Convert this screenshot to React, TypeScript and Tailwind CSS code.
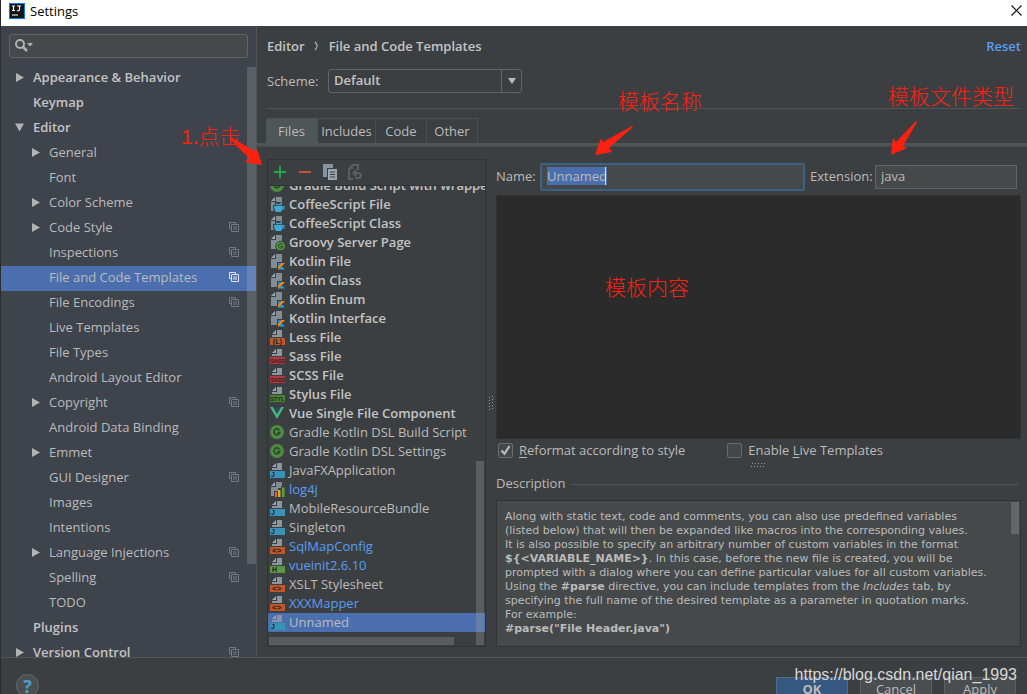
import { useEffect, useRef, useState } from "react";
import type { ReactNode } from "react";

type TreeNode = {
  label: string;
  level: 0 | 1;
  arrow?: "open" | "closed";
  project?: boolean;
};

const tree: TreeNode[] = [
  { label: "Appearance & Behavior", level: 0, arrow: "closed" },
  { label: "Keymap", level: 0 },
  { label: "Editor", level: 0, arrow: "open" },
  { label: "General", level: 1, arrow: "closed" },
  { label: "Font", level: 1 },
  { label: "Color Scheme", level: 1, arrow: "closed" },
  { label: "Code Style", level: 1, arrow: "closed", project: true },
  { label: "Inspections", level: 1, project: true },
  { label: "File and Code Templates", level: 1, project: true },
  { label: "File Encodings", level: 1, project: true },
  { label: "Live Templates", level: 1 },
  { label: "File Types", level: 1 },
  { label: "Android Layout Editor", level: 1 },
  { label: "Copyright", level: 1, arrow: "closed", project: true },
  { label: "Android Data Binding", level: 1 },
  { label: "Emmet", level: 1, arrow: "closed" },
  { label: "GUI Designer", level: 1, project: true },
  { label: "Images", level: 1 },
  { label: "Intentions", level: 1 },
  { label: "Language Injections", level: 1, arrow: "closed", project: true },
  { label: "Spelling", level: 1, project: true },
  { label: "TODO", level: 1 },
  { label: "Plugins", level: 0 },
  { label: "Version Control", level: 0, arrow: "closed", project: true },
];

type Kind =
  | "gradle" | "coffee" | "gsp" | "kotlin" | "less" | "sass" | "styl"
  | "vue" | "java" | "log" | "xml" | "html";

type Template = { label: string; kind: Kind; tone: "bold" | "plain" | "custom" };

const templates: Template[] = [
  { label: "Gradle Build Script with wrapper", kind: "gradle", tone: "bold" },
  { label: "CoffeeScript File", kind: "coffee", tone: "bold" },
  { label: "CoffeeScript Class", kind: "coffee", tone: "bold" },
  { label: "Groovy Server Page", kind: "gsp", tone: "bold" },
  { label: "Kotlin File", kind: "kotlin", tone: "bold" },
  { label: "Kotlin Class", kind: "kotlin", tone: "bold" },
  { label: "Kotlin Enum", kind: "kotlin", tone: "bold" },
  { label: "Kotlin Interface", kind: "kotlin", tone: "bold" },
  { label: "Less File", kind: "less", tone: "bold" },
  { label: "Sass File", kind: "sass", tone: "bold" },
  { label: "SCSS File", kind: "sass", tone: "bold" },
  { label: "Stylus File", kind: "styl", tone: "bold" },
  { label: "Vue Single File Component", kind: "vue", tone: "bold" },
  { label: "Gradle Kotlin DSL Build Script", kind: "gradle", tone: "plain" },
  { label: "Gradle Kotlin DSL Settings", kind: "gradle", tone: "plain" },
  { label: "JavaFXApplication", kind: "java", tone: "plain" },
  { label: "log4j", kind: "log", tone: "custom" },
  { label: "MobileResourceBundle", kind: "java", tone: "plain" },
  { label: "Singleton", kind: "java", tone: "plain" },
  { label: "SqlMapConfig", kind: "xml", tone: "custom" },
  { label: "vueinit2.6.10", kind: "html", tone: "custom" },
  { label: "XSLT Stylesheet", kind: "xml", tone: "plain" },
  { label: "XXXMapper", kind: "xml", tone: "custom" },
  { label: "Unnamed", kind: "java", tone: "plain" },
];

const toneClass = {
  bold: "font-semibold text-[#c4c4c4]",
  plain: "text-[#bbbbbb]",
  custom: "text-[#589df6]",
};

const bands: Partial<Record<Kind, { fill: string; text: string; size: number; x: number }>> = {
  less: { fill: "#c1562a", text: "{L}", size: 7, x: 2.5 },
  sass: { fill: "#b03a3f", text: "SASS", size: 5.3, x: 0.4 },
  styl: { fill: "#4b7f36", text: "STYL", size: 5.6, x: 0.2 },
  java: { fill: "#3a93b6", text: "J", size: 7, x: 1 },
  xml: { fill: "#c1562a", text: "<>", size: 8, x: 2 },
  html: { fill: "#5b9546", text: "H", size: 7, x: 2 },
};

function FileIcon({ kind }: { kind: Kind }) {
  const band = bands[kind];
  let drawing: ReactNode;
  if (kind === "gradle") {
    drawing = (
      <>
        <circle cx="7" cy="7" r="7" fill="#4f8a43" />
        <path d="M9.400 5.300A2.900 2.900 0 1 0 9.700 7.500H7.300" fill="none" stroke="#2b3f28" strokeWidth="1.500" />
      </>
    );
  } else if (kind === "vue") {
    drawing = (
      <>
        <path d="M0 1h3l4 7 4-7h3L7 13z" fill="#41b883" />
        <path d="M3 1h2.600L7 3.500 8.400 1H11L7 8z" fill="#35495e" />
      </>
    );
  } else if (band) {
    drawing = (
      <>
        <path d="M6 0v4H2z" fill="#9aa7b0" />
        <path d="M7 0h5v7H2V5h5z" fill="#8b979f" />
        <rect y="8" width="15" height="7" fill={band.fill} />
        <text
          x={band.x}
          y="14"
          fill="#231f20"
          fontSize={band.size}
          fontWeight="bold"
          fontFamily="Liberation Sans, sans-serif"
        >
          {band.text}
        </text>
      </>
    );
  } else {
    drawing = (
      <>
        <path d="M5 0v4H1z" fill="#9aa7b0" />
        <path d="M6 0h6v14H1V5h5z" fill="#808d95" />
        {kind === "kotlin" && (
          <>
            <path d="M7 8h8v7H7z" fill="#3c3f41" />
            <path d="M8 9h3.500L8 12.500z" fill="#1e88e5" />
            <path d="M11.500 9H15l-7 7v-3.500z" fill="#f88909" />
            <path d="M8.500 15.500l3.200-3.200L15 15.500z" fill="#19a5ee" />
          </>
        )}
        {kind === "coffee" && (
          <>
            <path d="M3 8h2V5h6v2h4v5l-2 4H5L3 12z" fill="#3c3f41" />
            <path d="M4 9h10.500v3.500H12.500L11 15H6C4.500 13 4 11 4 9z" fill="#3fa9d6" />
            <path d="M6 8.200V6.500l3 .8 1.500-1.300L12 8.200z" fill="#3fa9d6" />
            <path d="M13 10.200v1.300" stroke="#3c3f41" />
          </>
        )}
        {kind === "gsp" && (
          <>
            <circle cx="10.500" cy="11" r="4.800" fill="#4f9a3c" stroke="#3c3f41" />
            <path d="M12.500 9.800a2.200 2.200 0 1 0 .2 1.700h-2" fill="none" stroke="#21351d" />
          </>
        )}
        {kind === "log" && (
          <>
            <path d="M4 9h4V6h3V4h4v12H4z" fill="#3c3f41" />
            <path d="M5 10h2v5H5z" fill="#e0662c" />
            <path d="M8 8h2.500v7H8z" fill="#dba52f" />
            <path d="M12 5.500h2.500V15H12z" fill="#57a33f" />
          </>
        )}
      </>
    );
  }
  return (
    <svg className="h-4 w-4 shrink-0" viewBox="0 0 16 16" aria-hidden="true">
      {drawing}
    </svg>
  );
}

function TreeArrow({ state }: { state?: "open" | "closed" }) {
  return (
    <svg className="h-3 w-3 shrink-0" viewBox="0 0 12 12" fill="#b3b3b3" aria-hidden="true">
      {state === "closed" && <path d="M3 2v9l8-4.500z" />}
      {state === "open" && <path d="M2 2.500h9l-4.500 8z" />}
    </svg>
  );
}

function ProjectIcon({ active }: { active: boolean }) {
  return (
    <svg
      className={active ? "h-[10px] w-[10px] text-[#dfe3e8]" : "h-[10px] w-[10px] text-[#757a80]"}
      viewBox="0 0 10 10"
      fill="none"
      stroke="currentColor"
      aria-hidden="true"
    >
      <path d="M2 6.500H.5v-6h6V2M2.500 2.500h7v7h-7zM4 5h4M4 7h4" />
    </svg>
  );
}

function Sidebar() {
  const [selected, setSelected] = useState("File and Code Templates");
  return (
    <aside className="relative flex w-64 shrink-0 flex-col border-r border-[#53575a] bg-[#3e434c]">
      <div className="px-2 pt-2">
        <label className="flex h-6 items-center rounded-[3px] border border-[#646464] bg-[#45494a] px-[5px]">
          <span className="sr-only">Search settings</span>
          <svg className="h-4 w-5 shrink-0" viewBox="0 0 20 16" fill="none" aria-hidden="true">
            <circle cx="5" cy="6" r="4" stroke="#afb1b3" strokeWidth="2" />
            <path d="M8 9l4 4" stroke="#afb1b3" strokeWidth="2.500" />
            <path d="M12 5h6l-3 3.500z" fill="#afb1b3" />
          </svg>
          <input type="text" className="min-w-0 flex-1 bg-transparent outline-none" />
        </label>
      </div>
      <ul className="mt-2 min-h-0 flex-1 overflow-hidden">
        {tree.map((node) => {
          const active = node.label === selected;
          return (
            <li key={node.label}>
              <button
                type="button"
                onClick={() => setSelected(node.label)}
                className={`flex h-[25px] w-full items-center gap-2 pr-[17px] pb-1 text-left ${
                  node.level === 0 ? "pl-3 font-semibold text-[#c4c4c4]" : "pl-7"
                } ${active ? "bg-[#4b6eaf]" : ""}`}
              >
                <TreeArrow state={node.arrow} />
                <span className="flex-1 whitespace-nowrap">{node.label}</span>
                {node.project && <ProjectIcon active={active} />}
              </button>
            </li>
          );
        })}
      </ul>
      <div className="absolute top-[41px] right-0 h-[497px] w-[9px] bg-white/15" />
    </aside>
  );
}

function Tabs() {
  const [tab, setTab] = useState("Files");
  const tabs = [
    { name: "Files", width: "w-[52px]" },
    { name: "Includes", width: "w-[58px]" },
    { name: "Code", width: "w-[51px]" },
    { name: "Other", width: "w-[51px]" },
  ];
  return (
    <div className="mt-[9px]">
      <div className="flex pl-[9px]">
        {tabs.map((t) => (
          <button
            key={t.name}
            type="button"
            onClick={() => setTab(t.name)}
            className={`h-[25px] border-t border-r border-[#4b5052] text-center ${t.width} ${
              tab === t.name ? "bg-[#4e5658]" : ""
            }`}
          >
            {t.name}
          </button>
        ))}
      </div>
      <div className="h-[4px] border-b border-[#45494b] bg-[#4e5658]" />
    </div>
  );
}

function TemplateList() {
  const [selected, setSelected] = useState("Unnamed");
  return (
    <section className="relative flex w-[219px] shrink-0 flex-col border border-[#323232]">
      <div className="flex h-[26px] shrink-0 items-center gap-[9px] border-b border-[#323232] pb-[2px] pl-1">
        <button type="button" aria-label="Create template" className="h-4 w-4">
          <svg viewBox="0 0 16 16" stroke="#23a846" strokeWidth="2"><path d="M2 8h12M8 2v12" /></svg>
        </button>
        <button type="button" aria-label="Remove template" className="h-4 w-4">
          <svg viewBox="0 0 16 16" stroke="#c74f42" strokeWidth="2"><path d="M2 8h12" /></svg>
        </button>
        <button type="button" aria-label="Copy template" className="h-4 w-4">
          <svg viewBox="0 0 16 16">
            <path d="M1 0h10v4H5v9H1z" fill="#8594a0" />
            <path d="M6 5h9v11H6z" fill="#9aa7b0" />
            <path d="M8 8h5M8 10.500h5M8 13h5" stroke="#3c3f41" />
          </svg>
        </button>
        <button type="button" aria-label="Reset to default" disabled className="h-4 w-4">
          <svg viewBox="0 0 16 16" fill="none" stroke="#5b5e60" strokeWidth="2">
            <path d="M11 6V1H6L2 5v10h4" />
            <path d="M2 5h4V1z" fill="#5b5e60" stroke="none" />
            <path d="M6 9h5c4 0 4 5 0 5H8M9.500 6L6.500 9l3 3" />
          </svg>
        </button>
      </div>
      <div className="flex min-h-0 flex-1 flex-col justify-end overflow-hidden pb-[14px]">
        <ul>
          {templates.map((t) => (
            <li key={t.label}>
              <button
                type="button"
                onClick={() => setSelected(t.label)}
                className={`flex h-[19px] w-full items-center gap-[3px] pl-[2px] text-left whitespace-nowrap ${
                  toneClass[t.tone]
                } ${selected === t.label ? "bg-[#4b6eaf]" : ""}`}
              >
                <FileIcon kind={t.kind} />
                <span className="pb-[2px]">{t.label}</span>
              </button>
            </li>
          ))}
        </ul>
      </div>
      <div className="absolute right-[1px] bottom-[1px] h-[184px] w-2 bg-[#a6a6a6]/30" />
      <div className="absolute bottom-[1px] left-[1px] h-2 w-[185px] bg-[#595b5d]" />
    </section>
  );
}

function Check({ id, checked, children }: { id: string; checked?: boolean; children: ReactNode }) {
  return (
    <div className="flex items-center gap-[6px]">
      <span className="grid h-[15px] w-[15px]">
        <input
          id={id}
          type="checkbox"
          defaultChecked={checked}
          className="peer col-start-1 row-start-1 h-[15px] w-[15px] appearance-none rounded-[2px] border border-[#6b6b6b] bg-[#43494a]"
        />
        <svg
          className="pointer-events-none invisible col-start-1 row-start-1 h-[15px] w-[15px] peer-checked:visible"
          viewBox="0 0 15 15"
          fill="none"
          stroke="#bbbbbb"
          strokeWidth="2.200"
        >
          <path d="M3.500 7.500l3 3.300L11.500 3" />
        </svg>
      </span>
      <label htmlFor={id}>{children}</label>
    </div>
  );
}

function EditorPane() {
  const nameRef = useRef<HTMLInputElement>(null);
  useEffect(() => {
    nameRef.current?.focus();
    nameRef.current?.select();
  }, []);
  return (
    <section className="flex min-w-0 flex-1 flex-col">
      <div className="flex h-9 shrink-0 items-center">
        <label htmlFor="name" className="w-11 shrink-0 pb-[2px]">Name:</label>
        <div className="relative min-w-0 flex-1">
          <input
            id="name"
            ref={nameRef}
            defaultValue="Unnamed"
            className="block h-7 w-full rounded-[2px] border-2 border-[#3d6185] bg-[#45494a] px-[5px] pb-[2px] outline-none selection:bg-[#4b6eaf] selection:text-[#bbbbbb]"
          />
          <span className="absolute top-1 left-[65px] h-[18px] w-px bg-[#dddddd]" />
        </div>
        <label htmlFor="extension" className="w-[70px] shrink-0 pb-[2px] pl-[5px]">Extension:</label>
        <input
          id="extension"
          defaultValue="java"
          className="mr-1 h-6 w-[142px] border border-[#646464] bg-[#45494a] px-[5px] pb-[2px] outline-none"
        />
      </div>
      <textarea
        aria-label="Template content"
        className="min-h-0 w-full flex-1 resize-none border border-[#323232] bg-[#2b2b2b] outline-none"
      />
      <div className="flex h-6 shrink-0 items-center gap-[42px] pb-[2px] pl-[2px]">
        <Check id="reformat" checked><u className="underline-offset-2">R</u>eformat according to style</Check>
        <Check id="live">Enable <u className="underline-offset-2">L</u>ive Templates</Check>
      </div>
      <svg className="h-[5px] w-[15px] shrink-0 self-center" viewBox="0 0 15 5" fill="#9b9b9b" aria-hidden="true">
        {[0, 3, 6, 9, 12].map((x) => (
          <path key={x} d={`M${x + 1} 0h1v1h-1zM${x} 3h1v1h-1z`} />
        ))}
      </svg>
      <div className="mt-2 flex h-4 shrink-0 items-center gap-[6px] pr-[3px]">
        <h2 className="pb-[2px]">Description</h2>
        <div className="h-px flex-1 bg-[#515658]" />
      </div>
      <div className="relative mt-2 h-[147px] shrink-0 overflow-hidden border border-[#323232] bg-[#45494a] pt-[9px] pr-5 pl-2 font-['DejaVu_Sans',sans-serif] text-[11px] leading-[14px]">
        <p className="whitespace-nowrap">
          Along with static text, code and comments, you can also use predefined variables<br />
          (listed below) that will then be expanded like macros into the corresponding values.<br />
          It is also possible to specify an arbitrary number of custom variables in the format<br />
          <b>{"${<VARIABLE_NAME>}"}</b>. In this case, before the new file is created, you will be<br />
          prompted with a dialog where you can define particular values for all custom variables.<br />
          Using the <b>#parse</b> directive, you can include templates from the <i>Includes</i> tab, by<br />
          specifying the full name of the desired template as a parameter in quotation marks.<br />
          For example:<br />
          <b>#parse("File Header.java")</b>
        </p>
        <div className="absolute top-px right-px h-8 w-2 bg-[#646768]" />
      </div>
    </section>
  );
}

function Note({ className, children }: { className: string; children: ReactNode }) {
  return (
    <span
      className={`pointer-events-none absolute font-['Liberation_Sans','Noto_Sans_CJK_SC',sans-serif] text-[21px] leading-6 font-light whitespace-nowrap text-[#ff2010] ${className}`}
    >
      {children}
    </span>
  );
}

export default function App() {
  return (
    <div className="relative flex h-screen flex-col overflow-hidden border-l border-[#2b2b2b] bg-[#3c3f41] font-['Open_Sans','Noto_Sans_CJK_SC',sans-serif] text-[13px] leading-[18px] text-[#bbbbbb]">
      <header className="flex h-[26px] shrink-0 items-center bg-white pr-[5px] pb-[5px] pl-2 text-black">
        <svg className="h-4 w-4" viewBox="0 0 16 16" aria-hidden="true">
          <path d="M0 0h16v16H0z" fill="#087cfa" />
          <path d="M1 1h14v14H1z" fill="#151515" />
          <path d="M3 3h3M4.500 3v5M3 7.500h3M8 3h4M10.500 3v3c0 2-1 2-2.500 1.500M3 12h6" fill="none" stroke="#fff" strokeWidth="1.200" />
        </svg>
        <h1 className="ml-[5px] flex-1">Settings</h1>
        <button type="button" aria-label="Close" className="h-[11px] w-[11px]">
          <svg viewBox="0 0 11 11" stroke="#111" strokeWidth="1.200"><path d="M.5.5l10 10M10.500.5l-10 10" /></svg>
        </button>
      </header>

      <div className="flex min-h-0 flex-1">
        <Sidebar />
        <main className="flex min-w-0 flex-1 flex-col">
          <div className="flex items-center pt-[11px] pr-[6px] pl-[10px] font-semibold text-[#c4c4c4]">
            <span>Editor</span>
            <svg className="mx-[9px] h-[10px] w-[6px]" viewBox="0 0 6 10" fill="none" stroke="#bbbbbb" strokeWidth="1.200" aria-hidden="true">
              <path d="M1 1c3 3 3 5 0 8" />
            </svg>
            <span className="flex-1">File and Code Templates</span>
            <a href="#reset" className="text-[#589df6]">Reset</a>
          </div>
          <div className="mr-[7px] ml-[10px] flex h-[54px] items-center border-b border-[#515658] pb-[2px]">
            <label htmlFor="scheme" className="w-[61px]">Scheme:</label>
            <div className="grid w-[194px]">
              <select
                id="scheme"
                className="col-start-1 row-start-1 h-6 appearance-none rounded-[3px] border border-[#646464] bg-transparent px-[5px] pb-px font-semibold text-[#c4c4c4] outline-none"
              >
                <option>Default</option>
              </select>
              <span className="pointer-events-none col-start-1 row-start-1 flex h-6 w-[21px] items-center justify-center justify-self-end border-l border-[#646464]">
                <svg className="h-[6px] w-2" viewBox="0 0 8 6" fill="#bbbbbb"><path d="M0 0h8L4 6z" /></svg>
              </span>
            </div>
          </div>
          <Tabs />
          <div className="flex min-h-0 flex-1 pt-3 pr-[6px] pb-[10px] pl-[10px]">
            <TemplateList />
            <div className="flex w-[10px] shrink-0 items-center justify-center">
              <svg className="h-[15px] w-[5px]" viewBox="0 0 5 15" fill="#9b9b9b" aria-hidden="true">
                {[0, 3, 6, 9, 12].map((y) => (
                  <path key={y} d={`M0 ${y + 1}h1v1h-1zM3 ${y}h1v1h-1z`} />
                ))}
              </svg>
            </div>
            <EditorPane />
          </div>
        </main>
      </div>

      <footer className="flex h-[37px] shrink-0 items-start justify-between border-t border-[#515658] pr-[11px] pl-[15px]">
        <button
          type="button"
          aria-label="Help"
          className="mt-4 h-[23px] w-[23px] shrink-0 rounded-full border border-[#656a6d] bg-[#4a4f52] text-[18px] leading-5 font-bold text-[#4a9fd0]"
        >
          ?
        </button>
        <div className="mt-[19px] flex gap-3">
          <button type="button" className="h-6 w-[72px] border border-[#4c708c] bg-[#365880] font-bold">OK</button>
          <button type="button" className="h-6 w-[72px] border border-[#5e6060] bg-[#4a4e50]">Cancel</button>
          <button type="button" className="h-6 w-[72px] border border-[#5e6060] bg-[#4a4e50]">Apply</button>
        </div>
      </footer>

      <Note className="top-[125px] left-[180px]">1.点击</Note>
      <Note className="top-[90px] left-[617px]">模板名称</Note>
      <Note className="top-[85px] left-[887px]">模板文件类型</Note>
      <Note className="top-[276px] left-[604px]">模板内容</Note>
      <svg className="pointer-events-none absolute top-[135px] left-[228px] h-8 w-9" viewBox="0 0 36 32" fill="#ff2010" aria-hidden="true">
        <path d="M0 3L2 2 25 16 28 14 33 30 16 27 20 23z" />
      </svg>
      <svg className="pointer-events-none absolute top-[125px] left-[593px] h-8 w-10" viewBox="0 0 40 32" fill="#ff2010" aria-hidden="true">
        <path d="M1 30L7 13 9 17 38 1 39 2 15 23 18 27z" />
      </svg>
      <svg className="pointer-events-none absolute top-[120px] left-[889px] h-9 w-7" viewBox="0 0 28 36" fill="#ff2010" aria-hidden="true">
        <path d="M1 35L3 18 6 22 26 1 27 2 13 26 17 28z" />
      </svg>
      <span className="pointer-events-none absolute right-[10px] bottom-[9px] font-['Liberation_Sans',sans-serif] text-[16px] leading-5 text-[#d8d8d8]">
        https://blog.csdn.net/qian_1993
      </span>
    </div>
  );
}
